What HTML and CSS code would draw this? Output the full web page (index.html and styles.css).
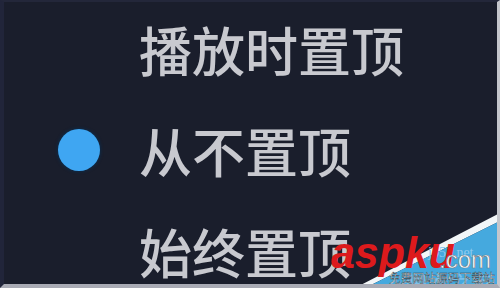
FILE: index.html
```html
<!DOCTYPE html>
<html lang="zh-CN">
<head>
<meta charset="utf-8">
<link rel="stylesheet" href="styles.css">
</head>
<body>
<div class="frame">
  <ul class="menu">
    <li class="item"><span class="mark"></span><span class="label">播放时置顶</span></li>
    <li class="item selected"><span class="mark"><span class="dot"></span></span><span class="label">从不置顶</span></li>
    <li class="item"><span class="mark"></span><span class="label">始终置顶</span></li>
  </ul>
  <svg class="watermark" width="180" height="88" viewBox="320 200 180 88" xmlns="http://www.w3.org/2000/svg">
    <polygon points="355,288 500,213 500,221 365,288" fill="#f2f6f8"/>
    <polygon points="365,288 500,221 500,288" fill="#45a9de"/>
    <text x="428" y="257" class="wm-faint">jb51.net</text>
    <text x="405" y="292" class="wm-faint2">脚本之家</text>
    <text x="331" y="268" class="wm-asp" textLength="124" lengthAdjust="spacingAndGlyphs">aspku</text>
    <text x="439" y="268" class="wm-com" textLength="52" lengthAdjust="spacingAndGlyphs">.com</text>
    <text x="389" y="283" class="wm-sub" textLength="106" lengthAdjust="spacingAndGlyphs">免费网站源码下载站</text>
  </svg>
</div>
</body>
</html>
```
FILE: styles.css
```css
html, body {
  margin: 0;
  padding: 0;
  background: #1a1e2c;
}
.frame {
  position: relative;
  width: 500px;
  height: 288px;
  box-sizing: border-box;
  background: #1a1e2c;
  border-left: 4px solid #21253a;
  border-top: 2px solid #23273a;
  border-right: 3px solid #c4c6cc;
  border-bottom: 4px solid #a9abb5;
  overflow: hidden;
}
.menu {
  list-style: none;
  margin: -3px 0 0 0;
  padding: 0;
  display: flex;
  flex-direction: column;
}
.item {
  display: flex;
  align-items: center;
  height: 101px;
  flex: none;
}
.mark {
  width: 135px;
  flex: none;
  display: flex;
  align-items: center;
  padding-left: 54px;
  padding-bottom: 1px;
  box-sizing: border-box;
}
.dot {
  width: 42px;
  height: 42px;
  border-radius: 50%;
  background: #3fa6f2;
  box-shadow: 0 0 3px 1px #0d2a48;
}
.label {
  font-family: "Noto Sans CJK SC", "Noto Sans", sans-serif;
  font-size: 53px;
  font-weight: 500;
  line-height: 1;
  color: #c8c9cf;
  white-space: nowrap;
}
.watermark {
  position: absolute;
  right: -3px;
  bottom: -4px;
}
.wm-asp {
  font-family: "Liberation Sans", Arial, sans-serif;
  font-weight: bold;
  font-style: italic;
  font-size: 44px;
  fill: #dd1a1c;
}
.wm-com {
  font-family: "Liberation Sans", Arial, sans-serif;
  font-size: 23px;
  fill: #ffffff;
  stroke: #6a7a86;
  stroke-width: 0.6px;
}
.wm-sub {
  font-family: "Noto Sans CJK SC", sans-serif;
  font-size: 12px;
  fill: #ffffff;
  stroke: #2a3a48;
  stroke-width: 0.4px;
}
.wm-faint {
  font-family: "Liberation Serif", serif;
  font-size: 14px;
  fill: #8fcbee;
}
.wm-faint2 {
  font-family: "Noto Sans CJK SC", sans-serif;
  font-size: 22px;
  fill: #7dc0e8;
}
```
